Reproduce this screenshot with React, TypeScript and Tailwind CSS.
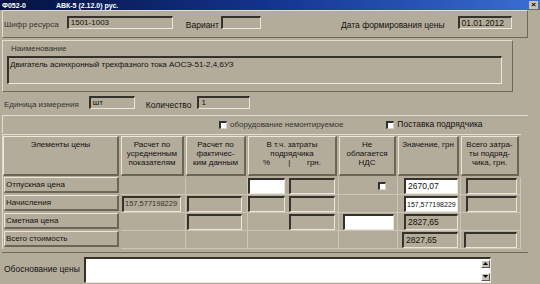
import React from "react";

const raised =
  "border-t border-l border-t-[#ebe6da] border-l-[#ebe6da] border-b-2 border-r-2 border-b-[#6b6554] border-r-[#6b6554]";
const sunkenGray =
  "border-t-2 border-l-2 border-t-[#34322b] border-l-[#34322b] border-b border-r border-b-[#ebe6da] border-r-[#ebe6da] bg-[#b4ac9a]";
const sunkenWhite =
  "border-t-2 border-l-2 border-t-[#34322b] border-l-[#34322b] border-b border-r border-b-[#ebe6da] border-r-[#ebe6da] bg-white";

function Field({
  kind,
  className,
  children,
}: {
  kind: "gray" | "white";
  className: string;
  children?: React.ReactNode;
}) {
  return (
    <div
      className={`${kind === "gray" ? sunkenGray : sunkenWhite} ${className} flex items-center overflow-hidden whitespace-nowrap pl-[1px] leading-none`}
    >
      {children}
    </div>
  );
}

function Check() {
  return (
    <div className="h-[8px] w-[8px] border-t-2 border-l-2 border-t-[#303030] border-l-[#303030] border-b border-r border-b-[#d8d2c4] border-r-[#d8d2c4] bg-white" />
  );
}

function Cell({ children, className = "" }: { children?: React.ReactNode; className?: string }) {
  return (
    <div className={`flex h-[18px] items-center border-r border-b border-r-[#cdc6b5] border-b-[#cdc6b5] ${className}`}>
      {children}
    </div>
  );
}

function RowLabel({ text }: { text: string }) {
  return (
    <div className="h-[18px] pb-[2px] pr-[2px] pl-[1px]">
      <div className={`${raised} flex h-full items-center pl-[1px]`}>{text}</div>
    </div>
  );
}

function Head({ children }: { children: React.ReactNode }) {
  return (
    <div className="h-[41px] pr-[2px] pb-[1px]">
      <div className={`${raised} h-full pt-[3px] text-center leading-[9px]`}>{children}</div>
    </div>
  );
}

export default function App() {
  return (
    <div className="h-[284px] w-[540px] overflow-hidden bg-[#b4ac9a] font-['Liberation_Sans',Arial,sans-serif] text-[8px] text-[#111]">
      {/* title bar */}
      <div className="flex h-[10px] items-center bg-linear-to-r from-[#06123e] via-[#13348f] to-[#3c6ed2] text-[7px] font-bold leading-none text-white">
        <span className="ml-[2px]">Ф052-0</span>
        <span className="ml-[30px]">АВК-5 (2.12.0) рус.</span>
        <div className="ml-auto mr-[2px] flex h-[8px] w-[9px] items-center justify-center bg-[#c8c2b4] text-[8px] font-bold text-black">
          ×
        </div>
      </div>

      {/* header fields */}
      <div className="ml-[2px] flex h-[28px] w-[526px] items-start border-t border-l border-t-[#e2ddd0] border-l-[#e2ddd0] border-b border-r border-b-[#6f6958] border-r-[#6f6958] pt-[5px]">
        <span className="ml-[1px] mt-[3px] text-[#333]">Шифр ресурса</span>
        <Field kind="gray" className="ml-[8px] h-[13px] w-[106px] pl-[2px]">
          1501-1003
        </Field>
        <span className="ml-[13px] mt-[3px] text-[8.5px]">Вариант</span>
        <Field kind="gray" className="ml-[2px] h-[13px] w-[40px]" />
        <span className="ml-[80px] mt-[3px] text-[8.5px]">Дата формирования цены</span>
        <Field kind="gray" className="ml-[13px] h-[13px] w-[54px] pl-[2px] text-[8.5px]">
          01.01.2012
        </Field>
      </div>

      {/* наименование */}
      <div className="ml-[2px] mt-[2px] h-[52px] w-[511px] border-t border-l border-t-[#e2ddd0] border-l-[#e2ddd0] border-b border-r border-b-[#6f6958] border-r-[#6f6958] pl-[4px] pt-[3px]">
        <div className="ml-[4px] leading-[9px] text-[#333]">Наименование</div>
        <Field kind="gray" className="mt-[3px] h-[28px] w-[495px] items-start pt-[3px]">
          Двигатель асинхронный трехфазного тока АОСЭ-51-2,4,6УЗ
        </Field>
      </div>

      {/* единица / количество */}
      <div className="ml-[2px] flex h-[23px] items-start pt-[4px]">
        <span className="ml-[2px] mt-[3px] text-[#333]">Единица измерения</span>
        <Field kind="gray" className="ml-[10px] h-[13px] w-[46px] pl-[2px]">
          шт
        </Field>
        <span className="ml-[11px] mt-[3px] text-[8.5px]">Количество</span>
        <Field kind="gray" className="ml-[6px] h-[13px] w-[53px] pl-[2px]">
          1
        </Field>
      </div>

      {/* checkboxes */}
      <div className="ml-[2px] flex h-[18px] w-[526px] items-center border-t border-l border-t-[#e2ddd0] border-l-[#e2ddd0]">
        <div className="ml-[216px] flex items-center gap-[3px]">
          <Check />
          <span className="text-[#333]">оборудование немонтируемое</span>
        </div>
        <div className="ml-[43px] flex items-center gap-[3px]">
          <Check />
          <span className="text-[8.5px]">Поставка подрядчика</span>
        </div>
      </div>

      {/* table */}
      <div className="ml-[2px] mt-[1px] grid w-[519px] grid-cols-[118px_65px_62px_91px_59px_63px_60px] border-t border-l border-t-[#e2ddd0] border-l-[#e2ddd0] pt-[1px]">
        <Head>Элементы цены</Head>
        <Head>
          Расчет по
          <br />
          усредненным
          <br />
          показателям
        </Head>
        <Head>
          Расчет по
          <br />
          фактичес-
          <br />
          ким данным
        </Head>
        <Head>
          В т.ч. затраты
          <br />
          подрядчика
          <div className="flex px-[14px]">
            <span>%</span>
            <span className="ml-[18px]">|</span>
            <span className="ml-auto">грн.</span>
          </div>
        </Head>
        <Head>
          Не
          <br />
          облагается
          <br />
          НДС
        </Head>
        <Head>Значение, грн</Head>
        <Head>
          Всего затра-
          <br />
          ты подряд-
          <br />
          чика, грн.
        </Head>

        {/* row 1 */}
        <RowLabel text="Отпускная цена" />
        <Cell />
        <Cell />
        <Cell>
          <Field kind="white" className="h-[16px] w-[37px]" />
          <Field kind="gray" className="ml-[4px] h-[16px] w-[46px]" />
        </Cell>
        <Cell>
          <div className="ml-[39px]">
            <Check />
          </div>
        </Cell>
        <Cell>
          <Field kind="white" className="ml-[6px] h-[16px] w-[54px] pl-[2px] text-[8.5px]">
            2670,07
          </Field>
        </Cell>
        <Cell>
          <Field kind="gray" className="ml-[5px] h-[16px] w-[51px]" />
        </Cell>

        {/* row 2 */}
        <RowLabel text="Начисления" />
        <Cell>
          <Field kind="gray" className="ml-[1px] h-[16px] w-[59px] text-[7.5px] text-[#333]">
            157,577198229
          </Field>
        </Cell>
        <Cell>
          <Field kind="gray" className="ml-[1px] h-[16px] w-[55px]" />
        </Cell>
        <Cell>
          <Field kind="gray" className="h-[16px] w-[37px]" />
          <Field kind="gray" className="ml-[4px] h-[16px] w-[46px]" />
        </Cell>
        <Cell />
        <Cell>
          <Field kind="white" className="ml-[6px] h-[16px] w-[54px] text-[7px]">
            157,577198229
          </Field>
        </Cell>
        <Cell>
          <Field kind="gray" className="ml-[5px] h-[16px] w-[51px]" />
        </Cell>

        {/* row 3 */}
        <RowLabel text="Сметная цена" />
        <Cell />
        <Cell>
          <Field kind="gray" className="ml-[1px] h-[16px] w-[55px]" />
        </Cell>
        <Cell>
          <Field kind="gray" className="ml-[41px] h-[16px] w-[46px]" />
        </Cell>
        <Cell>
          <Field kind="white" className="ml-[4px] h-[16px] w-[51px]" />
        </Cell>
        <Cell>
          <Field kind="gray" className="ml-[6px] h-[16px] w-[54px] pl-[2px] text-[8.5px]">
            2827,65
          </Field>
        </Cell>
        <Cell />

        {/* row 4 */}
        <RowLabel text="Всего стоимость" />
        <Cell />
        <Cell />
        <Cell />
        <Cell />
        <Cell>
          <Field kind="gray" className="ml-[4px] h-[16px] w-[56px] pl-[2px] text-[8.5px]">
            2827,65
          </Field>
        </Cell>
        <Cell>
          <Field kind="gray" className="ml-[3px] h-[16px] w-[53px]" />
        </Cell>
      </div>

      {/* обоснование */}
      <div className="ml-[2px] mt-[3px] flex h-[33px] w-[526px] items-center border-t border-t-[#6f6958] pt-[1px]">
        <span className="ml-[2px] text-[8.5px]">Обоснование цены</span>
        <div className={`${sunkenWhite} ml-[4px] flex h-[26px] w-[407px] justify-end`}>
          <div className="flex h-full w-[9px] flex-col justify-between py-[1px]">
            <div className="flex h-[8px] items-center justify-center border-t border-l border-t-white border-l-white border-b border-r border-b-[#555] border-r-[#555] bg-[#c8c2b4]">
              <svg width="5" height="3" viewBox="0 0 5 3">
                <path d="M2.5 0 L5 3 L0 3 Z" fill="#000" />
              </svg>
            </div>
            <div className="flex h-[8px] items-center justify-center border-t border-l border-t-white border-l-white border-b border-r border-b-[#555] border-r-[#555] bg-[#c8c2b4]">
              <svg width="5" height="3" viewBox="0 0 5 3">
                <path d="M0 0 L5 0 L2.5 3 Z" fill="#000" />
              </svg>
            </div>
          </div>
        </div>
      </div>
    </div>
  );
}
